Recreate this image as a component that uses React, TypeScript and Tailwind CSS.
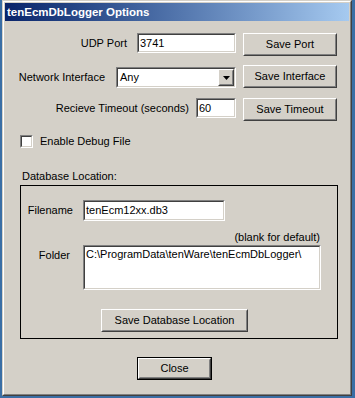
import React from "react";

function Raised({ className = "", children }: { className?: string; children?: React.ReactNode }) {
  return (
    <div className={`border border-t-white border-l-white border-b-[#404040] border-r-[#404040] ${className}`}>
      <div className="w-full h-full border border-t-[#d4d0c8] border-l-[#d4d0c8] border-b-[#808080] border-r-[#808080] bg-[#d4d0c8] flex items-center justify-center">
        {children}
      </div>
    </div>
  );
}

function Sunken({ className = "", children, inner = "" }: { className?: string; children?: React.ReactNode; inner?: string }) {
  return (
    <div className={`border border-t-[#808080] border-l-[#808080] border-b-white border-r-white ${className}`}>
      <div className={`w-full h-full border border-t-[#404040] border-l-[#404040] border-b-[#d4d0c8] border-r-[#d4d0c8] bg-white ${inner}`}>
        {children}
      </div>
    </div>
  );
}

export default function App() {
  return (
    <div className="w-[355px] h-[398px] bg-[#3a6ea5] font-['Liberation_Sans',Arial,sans-serif] text-[11px] text-black overflow-hidden">
      <div className="ml-[2px] w-[350px] h-[396px] border border-t-[#d4d0c8] border-l-[#d4d0c8] border-b-[#404040] border-r-[#404040]">
        <div className="w-full h-full border border-t-white border-l-white border-b-[#808080] border-r-[#808080] bg-[#d4d0c8] p-[1px] flex flex-col">
          {/* Title bar */}
          <div className="h-[18px] bg-gradient-to-r from-[#0a246a] to-[#a6caf0] text-white font-bold text-[11.5px] leading-[18px] pl-[2px]">
            tenEcmDbLogger Options
          </div>
          {/* Client */}
          <div className="flex flex-col mt-[1px]">
            {/* Row 1 */}
            <div className="mt-[11px] h-[23px] flex justify-end items-start pr-[12px]">
              <span className="h-[20px] leading-[20px] mr-[10px]">UDP Port</span>
              <Sunken className="w-[99px] h-[20px] mr-[7px]" inner="pl-[1px] leading-[16px]">3741</Sunken>
              <Raised className="w-[94px] h-[23px]">Save Port</Raised>
            </div>
            {/* Row 2 */}
            <div className="mt-[9px] h-[23px] flex justify-end items-start pr-[12px]">
              <span className="mt-[2px] h-[20px] leading-[20px] mr-[11px]">Network Interface</span>
              <Sunken className="mt-[2px] w-[120px] h-[21px] mr-[7px]" inner="flex items-stretch">
                <span className="flex-1 pl-[2px] leading-[17px]">Any</span>
                <Raised className="w-[16px] h-[17px]">
                  <svg width="7" height="4" viewBox="0 0 7 4">
                    <path d="M0 0h7L3.5 4z" fill="#000" />
                  </svg>
                </Raised>
              </Sunken>
              <Raised className="w-[94px] h-[23px]">Save Interface</Raised>
            </div>
            {/* Row 3 */}
            <div className="mt-[10px] h-[23px] flex justify-end items-start pr-[12px]">
              <span className="h-[20px] leading-[20px] mr-[7px]">Recieve Timeout (seconds)</span>
              <Sunken className="w-[40px] h-[20px] mr-[7px]" inner="pl-[1px] leading-[16px]">60</Sunken>
              <Raised className="w-[94px] h-[23px]">Save Timeout</Raised>
            </div>
            {/* Checkbox */}
            <div className="mt-[14px] pl-[15px] flex items-center h-[13px]">
              <Sunken className="w-[13px] h-[13px]" />
              <span className="ml-[7px] leading-[13px]">Enable Debug File</span>
            </div>
            {/* Database label */}
            <div className="mt-[22px] pl-[17px] leading-[13px]">Database Location:</div>
            {/* Group */}
            <div className="mt-[2px] ml-[15px] w-[318px] h-[154px] border border-black flex flex-col">
              <div className="mt-[14px] flex items-start">
                <span className="w-[52px] text-right h-[21px] leading-[21px]">Filename</span>
                <Sunken className="ml-[10px] w-[142px] h-[21px]" inner="pl-[1px] leading-[17px]">tenEcm12xx.db3</Sunken>
              </div>
              <div className="mt-[10px] pr-[17px] text-right leading-[13px]">(blank for default)</div>
              <div className="mt-[1px] flex items-start">
                <span className="w-[49px] text-right h-[21px] leading-[21px]">Folder</span>
                <Sunken className="ml-[13px] w-[238px] h-[45px]" inner="pl-[1px] pt-[1px] leading-[13px]">
                  C:\ProgramData\tenWare\tenEcmDbLogger\
                </Sunken>
              </div>
              <Raised className="mt-[19px] ml-[80px] w-[147px] h-[23px]">Save Database Location</Raised>
            </div>
            {/* Close */}
            <div className="mt-[18px] ml-[132px] w-[75px] h-[23px] border border-black">
              <Raised className="w-full h-full">Close</Raised>
            </div>
          </div>
        </div>
      </div>
    </div>
  );
}
